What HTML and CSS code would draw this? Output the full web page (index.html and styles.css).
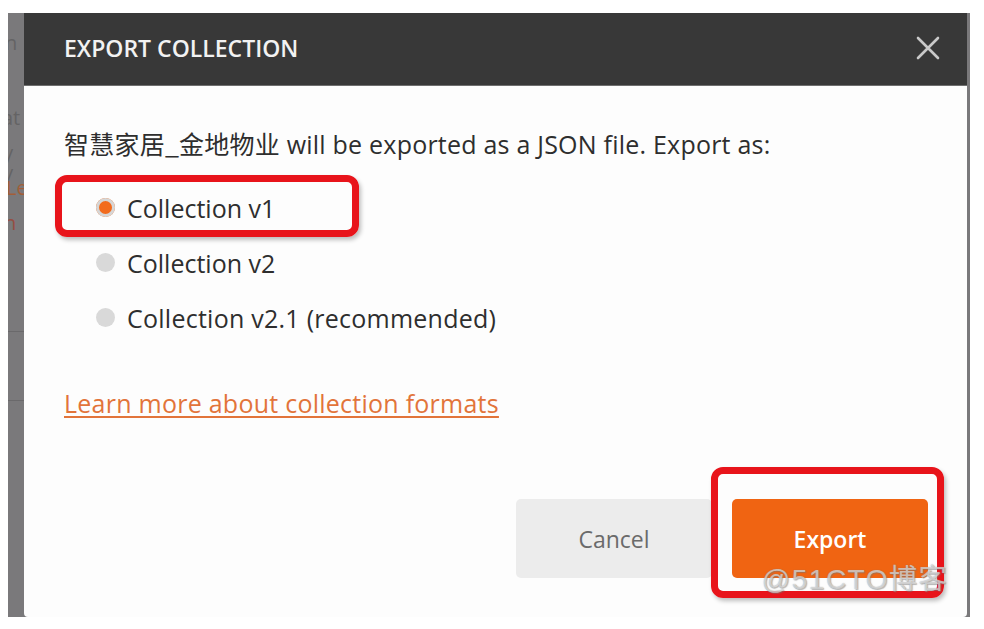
FILE: index.html
```html
<!DOCTYPE html>
<html>
<head>
<meta charset="utf-8">
<link rel="stylesheet" href="styles.css">
</head>
<body>
<div class="backdrop">
  <div class="strip">
    <div class="ghost g1">n</div>
    <div class="ghost g2">at</div>
    <div class="ghost g3">/ /</div>
    <div class="ghost g4">Le</div>
    <div class="ghost g5">n</div>
    <div class="rule r1"></div>
    <div class="rule r2"></div>
  </div>
  <div class="dialog">
    <div class="header">
      <div class="title">EXPORT COLLECTION</div>
      <svg class="close" width="24" height="24" viewBox="0 0 24 24"><path d="M2 2 L22 22 M22 2 L2 22" stroke="#c9c9c9" stroke-width="2.6" stroke-linecap="round"/></svg>
    </div>
    <div class="body">
      <p class="desc"><span class="cjk">智慧家居_金地物业</span> will be exported as a JSON file. Export as:</p>
      <div class="options">
        <label class="option selected"><span class="radio"></span>Collection v1<span class="mark mark-opt"></span></label>
        <label class="option"><span class="radio"></span>Collection v2</label>
        <label class="option"><span class="radio"></span><span class="wide">Collection v2.1 (recommended)</span></label>
      </div>
      <a class="link">Learn more about collection formats</a>
      <div class="actions">
        <button class="btn cancel">Cancel</button>
        <button class="btn export">Export<span class="mark mark-btn"></span></button>
      </div>
      <div class="watermark">@51CTO博客</div>
    </div>
  </div>
</div>
</body>
</html>
```

FILE: styles.css
```css
* { box-sizing: border-box; }
html, body { margin: 0; padding: 0; background: #ffffff; }
body {
  font-family: "Open Sans", "Noto Sans CJK SC", sans-serif;
  width: 984px;
  height: 629px;
  overflow: hidden;
}
.backdrop {
  margin: 13px 0 0 8px;
  width: 962px;
  height: 604px;
  background: #7a797b;
  display: flex;
  padding-right: 3px;
}
.strip {
  width: 16px;
  overflow: hidden;
  position: relative;
  font-size: 20px;
  color: #4a4a4a;
}
.ghost { position: absolute; left: -4px; line-height: 20px; opacity: 0.45; }
.g1 { top: 20px; left: -3px; }
.g2 { top: 95px; left: -6px; }
.g3 { top: 133px; left: -2px; }
.g4 { top: 165px; left: -2px; color: #b3541c; opacity: 0.7; }
.g5 { top: 200px; left: -4px; color: #a8321c; opacity: 0.6; }
.rule { position: absolute; left: 0; width: 16px; height: 1px; background: #6a696b; }
.r1 { top: 318px; }
.r2 { top: 387px; }
.dialog {
  flex: 1;
  display: flex;
  flex-direction: column;
  background: #fdfdfd;
  border-radius: 0 0 4px 4px;
  overflow: hidden;
}
.header {
  height: 73px;
  background: #383838;
  display: flex;
  align-items: center;
  justify-content: space-between;
  padding: 0 27px 2px 40px;
  border-bottom: 1px solid #6e6e6e;
}
.title {
  color: #f2f2f2;
  font-size: 23px;
  font-weight: 600;
  letter-spacing: 0px;
}
.close { display: block; }
.body {
  flex: 1;
  position: relative;
  padding: 41px 39px 0 40px;
  display: flex;
  flex-direction: column;
  align-items: flex-start;
}
.desc {
  margin: 0;
  font-size: 25px;
  line-height: 32px;
  color: #2e2e2e;
  letter-spacing: 0.22px;
}
.cjk { font-family: "Noto Sans CJK SC", sans-serif; }
.options {
  margin-top: 20px;
  display: flex;
  flex-direction: column;
}
.option {
  position: relative;
  height: 55px;
  display: flex;
  align-items: center;
  padding-left: 32px;
  font-size: 25px;
  color: #2e2e2e;
}
.wide { letter-spacing: 0.25px; }
.radio {
  width: 19px;
  height: 19px;
  border-radius: 50%;
  background: #d9d9d9;
  margin-right: 12px;
  flex: none;
}
.option.selected .radio {
  background: #f26b1d;
  box-shadow: inset 0 0 0 3px #d6d6d6;
}
.link {
  margin-top: 42px;
  font-size: 25px;
  line-height: 32px;
  color: #e2743a;
  letter-spacing: 0.25px;
  text-decoration: underline;
  text-decoration-thickness: 2px;
  text-underline-offset: 3px;
}
.actions {
  margin-top: 80px;
  align-self: flex-end;
  display: flex;
  gap: 20px;
}
.btn {
  width: 196px;
  height: 79px;
  border: none;
  border-radius: 5px;
  font-family: "Open Sans", sans-serif;
  font-size: 23px;
  position: relative;
}
.cancel { background: #ececec; color: #6a6a6a; }
.export { background: #f06412; color: #ffffff; font-weight: 600; }
.mark {
  position: absolute;
  border: 7px solid #e8141b;
  border-radius: 12px;
  box-shadow: 2px 3px 4px rgba(0,0,0,0.25);
  pointer-events: none;
}
.mark-opt { left: -9px; top: -5px; width: 304px; height: 62px; }
.mark-btn { left: -21px; top: -32px; width: 233px; height: 131px; }
.watermark {
  position: absolute;
  right: 19px;
  bottom: 20px;
  font-family: "Liberation Sans", "Noto Sans CJK SC", sans-serif;
  font-size: 28px;
  color: rgba(255,255,255,0.55);
  text-shadow: 0 0 1px rgba(120,120,120,0.7), 1px 1px 1px rgba(120,120,120,0.5);
  letter-spacing: 1.5px;
}
```
